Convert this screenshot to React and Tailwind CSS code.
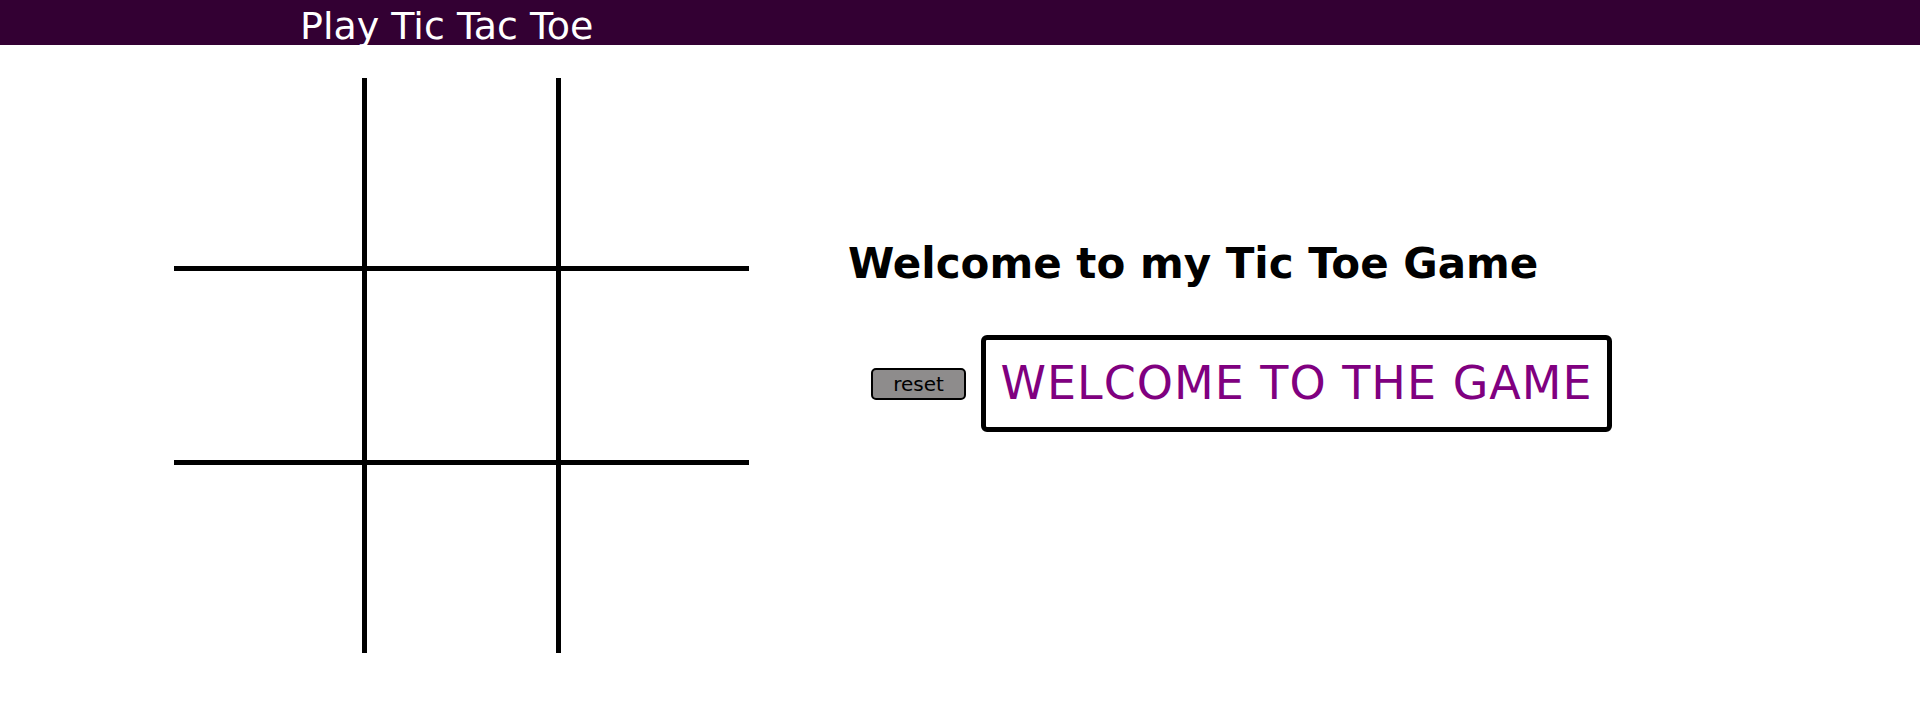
import React from "react";

export default function App() {
  const cells = Array.from({ length: 9 });
  return (
    <div className="min-h-screen bg-white font-['Comic_Sans_MS','DejaVu_Sans',sans-serif]">
      <header className="h-[45px] bg-[#330033]">
        <h1 className="pl-[300px] pt-[3px] text-white text-[38px] leading-[46px] font-normal">
          Play Tic Tac Toe
        </h1>
      </header>
      <main className="flex pl-[174px] pt-[33px]">
        <div className="grid grid-cols-3 gap-[5px] bg-black w-[575px] h-[575px] shrink-0">
          {cells.map((_, i) => (
            <div key={i} className="bg-white" />
          ))}
        </div>
        <div className="ml-[99px] pt-[162px]">
          <h2 className="text-[42px] leading-[48px] font-bold text-black">
            Welcome to my Tic Toe Game
          </h2>
          <div className="flex items-center gap-[15px] ml-[23px] mt-[47px]">
            <button className="w-[95px] h-[32px] border-2 border-black rounded-[5px] bg-[#8e8c8c] text-[20px] leading-none text-black">
              reset
            </button>
            <div className="w-[631px] h-[97px] border-[5px] border-black rounded-[6px] flex items-center justify-center text-[#800080] text-[46px] tracking-[1px]">
              WELCOME TO THE GAME
            </div>
          </div>
        </div>
      </main>
    </div>
  );
}
